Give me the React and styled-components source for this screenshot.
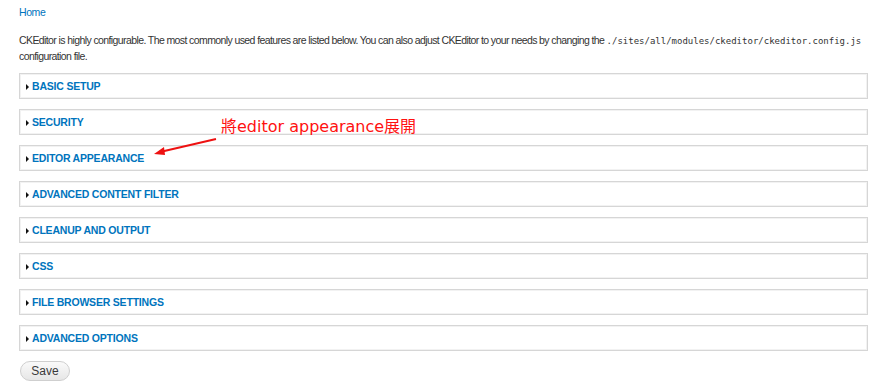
import React from "react"
import styled, { createGlobalStyle } from "styled-components"

const sections = [
	"Basic setup",
	"Security",
	"Editor appearance",
	"Advanced content filter",
	"Cleanup and output",
	"CSS",
	"File browser settings",
	"Advanced options",
]

const App = () => {
	return (
		<Page>
			<Global />
			<Crumb href="#">Home</Crumb>
			<Intro>
				CKEditor is highly configurable. The most commonly used features are listed below. You can also adjust CKEditor to your needs by changing the <Code>./sites/all/modules/ckeditor/ckeditor.config.js</Code> configuration file.
			</Intro>
			<List>
				{sections.map(s => (
					<Fieldset key={s}>
						<Arrow />
						<Legend href="#">{s}</Legend>
					</Fieldset>
				))}
			</List>
			<Save>Save</Save>
			<Note>將editor appearance展開</Note>
			<Pointer width="64" height="20" viewBox="0 0 64 20">
				<line x1="62" y1="2" x2="6" y2="15" stroke="#ee1111" strokeWidth="2" />
				<polygon points="0,17 10,10 11,18" fill="#ee1111" />
			</Pointer>
		</Page>
	)
}

export default App

const Global = createGlobalStyle`
    body {
        margin: 0;
        background: #fff;
        font-family: "Liberation Sans", Arial, sans-serif;
    }
`

const Page = styled.div`
    position: relative;
    width: 882px;
    height: 388px;
    box-sizing: border-box;
    padding: 5px 4px 0 19px;
    display: flex;
    flex-direction: column;
    align-items: flex-start;
`

const Crumb = styled.a`
    font-size: 10.5px;
    letter-spacing: -0.4px;
    line-height: 14px;
    color: #0074bd;
    text-decoration: none;
`

const Intro = styled.p`
    margin: 14px 0 0 0;
    font-size: 10.5px;
    letter-spacing: -0.6px;
    line-height: 15px;
    color: #333;
    width: 858px;
`

const Code = styled.code`
    font-family: "DejaVu Sans Mono", monospace;
    font-size: 9px;
    letter-spacing: 0;
    color: #333;
`

const List = styled.div`
    margin-top: 9px;
    width: 849px;
    display: flex;
    flex-direction: column;
    gap: 10px;
`

const Fieldset = styled.div`
    height: 24px;
    border: 1px solid #d6d6d6;
    box-shadow: inset 0 0 0 1px #f2f2f2;
    display: flex;
    align-items: center;
    padding-left: 6px;
`

const Arrow = styled.span`
    width: 0;
    height: 0;
    border-top: 3px solid transparent;
    border-bottom: 3px solid transparent;
    border-left: 3px solid #111;
    margin-right: 3px;
    margin-top: 1px;
`

const Legend = styled.a`
    font-size: 10.5px;
    letter-spacing: -0.2px;
    font-weight: bold;
    text-transform: uppercase;
    color: #0074bd;
    text-decoration: none;
`

const Save = styled.button`
    margin-top: 10px;
    margin-left: 1px;
    width: 50px;
    height: 20px;
    border: 1px solid #cfcfcf;
    border-radius: 10px;
    background: linear-gradient(#fafafa, #e6e6e6);
    font-family: "Liberation Sans", Arial, sans-serif;
    font-size: 12px;
    color: #3a3a3a;
    padding: 0;
`

const Note = styled.div`
    position: absolute;
    left: 221px;
    top: 113px;
    font-family: "DejaVu Sans", "Noto Sans CJK TC", sans-serif;
    font-size: 16px;
    color: #ff1111;
`

const Pointer = styled.svg`
    position: absolute;
    left: 154px;
    top: 137px;
`
